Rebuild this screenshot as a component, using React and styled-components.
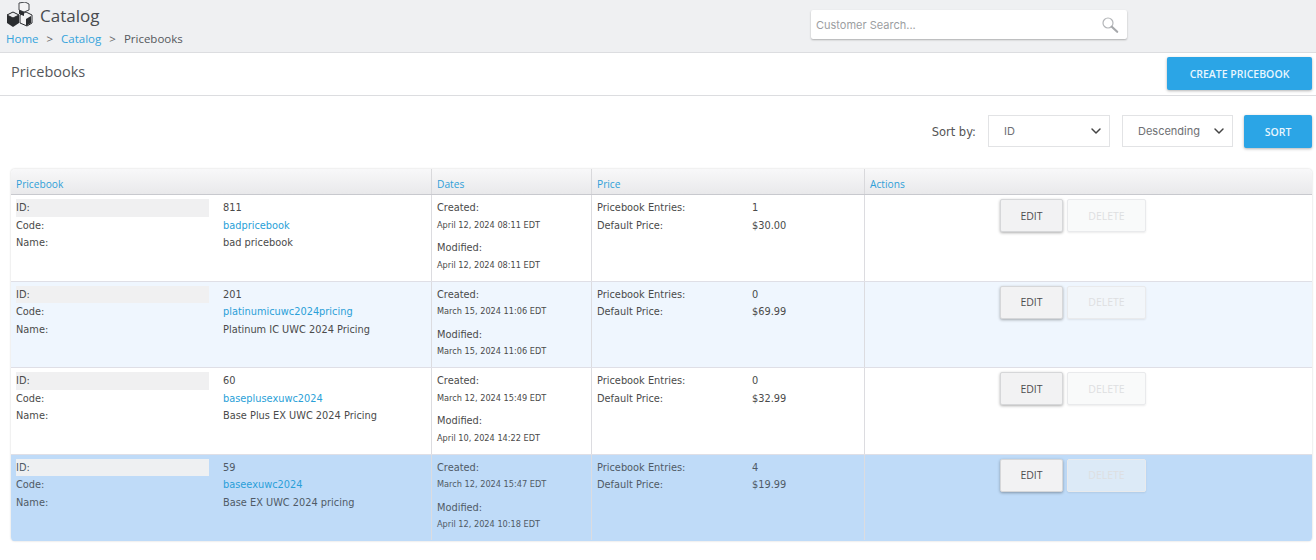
import styled, { createGlobalStyle } from "styled-components";
import { ChevronDown } from "lucide-react";

const pricebooks = [
  {
    id: "811",
    code: "badpricebook",
    name: "bad pricebook",
    created: "April 12, 2024 08:11 EDT",
    modified: "April 12, 2024 08:11 EDT",
    entries: "1",
    price: "$30.00",
    tone: "plain",
  },
  {
    id: "201",
    code: "platinumicuwc2024pricing",
    name: "Platinum IC UWC 2024 Pricing",
    created: "March 15, 2024 11:06 EDT",
    modified: "March 15, 2024 11:06 EDT",
    entries: "0",
    price: "$69.99",
    tone: "alt",
  },
  {
    id: "60",
    code: "baseplusexuwc2024",
    name: "Base Plus EX UWC 2024 Pricing",
    created: "March 12, 2024 15:49 EDT",
    modified: "April 10, 2024 14:22 EDT",
    entries: "0",
    price: "$32.99",
    tone: "plain",
  },
  {
    id: "59",
    code: "baseexuwc2024",
    name: "Base EX UWC 2024 pricing",
    created: "March 12, 2024 15:47 EDT",
    modified: "April 12, 2024 10:18 EDT",
    entries: "4",
    price: "$19.99",
    tone: "selected",
  },
];

function CubesIcon() {
  return (
    <svg width="28" height="26" viewBox="0 0 28 26">
      <path d="M13 1l6-1 4 2v6l-5 2-5-2z" fill="#f4f4f5" stroke="#44474b" strokeWidth="1" />
      <path d="M1 13l6-3 6 3v8l-6 4-6-4z" fill="#2b2d30" />
      <path d="M7 10l6 3-6 3-6-3z" fill="#e9eaec" stroke="#2b2d30" strokeWidth="1" />
      <path d="M14 13l6-3 6 3v8l-5 3-7-3z" fill="#f2f2f3" stroke="#2b2d30" strokeWidth="1" />
      <path d="M20 17l5-3v7l-5 3z" fill="#2b2d30" />
      <path d="M13 8l5 2v4l-5-2z" fill="#2b2d30" />
    </svg>
  );
}

function SearchIcon() {
  return (
    <svg width="18" height="18" viewBox="0 0 18 18" fill="none">
      <circle cx="7" cy="7" r="5" stroke="#b4b6b9" strokeWidth="1.2" />
      <path d="M10.8 10.8l5.4 5" stroke="#a6a8ab" strokeWidth="2.2" strokeLinecap="round" />
    </svg>
  );
}

function PricebookRow({ book }) {
  return (
    <Row $tone={book.tone}>
      <Cell>
        <InfoGrid>
          <IdLabel $tone={book.tone}>ID:</IdLabel>
          <Value>{book.id}</Value>
          <Label>Code:</Label>
          <CodeLink href="#">{book.code}</CodeLink>
          <Label>Name:</Label>
          <Value>{book.name}</Value>
        </InfoGrid>
      </Cell>
      <DateCell>
        <Label>Created:</Label>
        <DateText>{book.created}</DateText>
        <ModifiedLabel>Modified:</ModifiedLabel>
        <DateText>{book.modified}</DateText>
      </DateCell>
      <Cell>
        <PriceGrid>
          <Label>Pricebook Entries:</Label>
          <Value>{book.entries}</Value>
          <Label>Default Price:</Label>
          <Value>{book.price}</Value>
        </PriceGrid>
      </Cell>
      <ActionCell>
        <EditButton>EDIT</EditButton>
        <DeleteButton disabled>DELETE</DeleteButton>
      </ActionCell>
    </Row>
  );
}

export default function App() {
  return (
    <Page>
      <GlobalStyle />
      <TopBar>
        <TitleBlock>
          <TitleLine>
            <CubesIcon />
            <AppTitle>Catalog</AppTitle>
          </TitleLine>
          <Breadcrumbs>
            <Crumb href="#">Home</Crumb>
            <Sep>&gt;</Sep>
            <Crumb href="#">Catalog</Crumb>
            <Sep>&gt;</Sep>
            <span>Pricebooks</span>
          </Breadcrumbs>
        </TitleBlock>
        <SearchBox>
          <SearchPlaceholder>Customer Search...</SearchPlaceholder>
          <SearchIcon />
        </SearchBox>
      </TopBar>

      <HeadingBar>
        <Heading>Pricebooks</Heading>
        <CreateButton>CREATE PRICEBOOK</CreateButton>
      </HeadingBar>

      <SortBar>
        <SortLabel>Sort by:</SortLabel>
        <SelectBox $width={122}>
          <span>ID</span>
          <ChevronDown size={16} strokeWidth={2.2} color="#444" />
        </SelectBox>
        <SelectBox $width={111} $tight>
          <span>Descending</span>
          <ChevronDown size={16} strokeWidth={2.2} color="#444" />
        </SelectBox>
        <SortButton>SORT</SortButton>
      </SortBar>

      <Table>
        <HeaderRow>
          <HeaderCell>Pricebook</HeaderCell>
          <HeaderCell>Dates</HeaderCell>
          <HeaderCell>Price</HeaderCell>
          <HeaderCell>Actions</HeaderCell>
        </HeaderRow>
        {pricebooks.map((book) => (
          <PricebookRow key={book.id} book={book} />
        ))}
      </Table>
    </Page>
  );
}

const GlobalStyle = createGlobalStyle`
  html, body {
    margin: 0;
    padding: 0;
    background: #fff;
  }
  * {
    box-sizing: border-box;
  }
`;

const toneColors = {
  plain: "#ffffff",
  alt: "#eff6fe",
  selected: "#bfdbf8",
};

const columns = "421px 160px 273px 1fr";

const Page = styled.div`
  width: 1316px;
  height: 560px;
  overflow: hidden;
  background: #fff;
  font-family: "DejaVu Sans", sans-serif;
  color: #444;
`;

const TopBar = styled.header`
  height: 53px;
  background: #eff0f2;
  border-bottom: 1px solid #dcdde0;
  display: flex;
  justify-content: space-between;
  padding: 0 189px 0 6px;
`;

const TitleBlock = styled.div`
  display: flex;
  flex-direction: column;
`;

const TitleLine = styled.div`
  display: flex;
  align-items: center;
  gap: 6px;
  height: 30px;
  margin-bottom: 0;
`;

const AppTitle = styled.h1`
  margin: 0;
  font-family: "Open Sans", sans-serif;
  font-weight: 400;
  font-size: 17px;
  color: #4a4c50;
`;

const Breadcrumbs = styled.nav`
  display: flex;
  align-items: center;
  margin-top: 1px;
  font-family: "Open Sans", sans-serif;
  font-size: 11.5px;
  color: #55585c;
`;

const Crumb = styled.a`
  color: #35a4dc;
  text-decoration: none;
`;

const Sep = styled.span`
  margin: 0 8px;
  color: #666;
`;

const SearchBox = styled.div`
  width: 316px;
  height: 29px;
  margin-top: 10px;
  padding: 0 8px 0 5px;
  background: #fff;
  border-radius: 2px;
  box-shadow: 0 1px 2px rgba(0, 0, 0, 0.28);
  display: flex;
  align-items: center;
  justify-content: space-between;
`;

const SearchPlaceholder = styled.span`
  font-family: "Inter", sans-serif;
  font-size: 11px;
  color: #9c9ea1;
`;

const HeadingBar = styled.div`
  height: 43px;
  border-bottom: 1px solid #dcdde0;
  display: flex;
  justify-content: space-between;
  align-items: flex-start;
  padding: 4px 4px 0 11px;
`;

const Heading = styled.h2`
  margin: 5px 0 0;
  font-family: "Open Sans", sans-serif;
  font-weight: 400;
  font-size: 14.5px;
  color: #55585c;
`;

const BlueButton = styled.button`
  border: 0;
  border-radius: 2px;
  background: #2ba5e6;
  color: #e8f6fe;
  font-family: "Open Sans", sans-serif;
  font-weight: 600;
  font-size: 10.5px;
  box-shadow: 0 1px 3px rgba(0, 0, 0, 0.3);
`;

const CreateButton = styled(BlueButton)`
  width: 145px;
  height: 33px;
`;

const SortBar = styled.div`
  height: 73px;
  padding: 19px 4px 0 0;
  display: flex;
  justify-content: flex-end;
  align-items: flex-start;
`;

const SortLabel = styled.span`
  margin: 10px 12px 0 0;
  font-size: 11.5px;
  color: #555;
`;

const SelectBox = styled.div`
  width: ${(p) => p.$width}px;
  height: 32px;
  margin-right: 12px;
  padding: ${(p) => (p.$tight ? "0 0 0 15px" : "0 2px 0 15px")};
  border: 1px solid #e2e3e5;
  background: #fff;
  display: flex;
  align-items: center;
  justify-content: space-between;
  font-family: "Inter", sans-serif;
  font-size: 11px;
  color: #6e7073;
  padding-right: 5px;
`;

const SortButton = styled(BlueButton)`
  width: 68px;
  height: 33px;
  margin-left: -1px;
`;

const Table = styled.div`
  width: 1301px;
  margin-left: 11px;
  border-radius: 4px;
  overflow: hidden;
  box-shadow: 0 0 2px rgba(0, 0, 0, 0.22);
  font-size: 9.8px;
`;

const HeaderRow = styled.div`
  display: grid;
  grid-template-columns: ${columns};
  height: 26px;
  background: linear-gradient(#f8f8f9, #e9e9eb);
  border-bottom: 1px solid #c8c9ce;
`;

const HeaderCell = styled.div`
  padding: 8px 5px 0;
  font-family: "Open Sans", sans-serif;
  font-size: 10.2px;
  color: #2f9fd8;
  border-right: 1px solid #d9d9dc;

  &:last-child {
    border-right: 0;
  }
`;

const Row = styled.div`
  display: grid;
  grid-template-columns: ${columns};
  height: 86.6px;
  background: ${(p) => toneColors[p.$tone]};
  border-bottom: 1px solid ${(p) => (p.$tone === "selected" ? "#bfdbf8" : "#dfdfe6")};
  color: ${(p) => (p.$tone === "selected" ? "#4f5a66" : "#4a4a4a")};
`;

const Cell = styled.div`
  padding: 4px 5px 0;
  border-right: 1px solid #dcdce0;

  ${Row}[data-last] & {
    border-right: 0;
  }
`;

const InfoGrid = styled.div`
  display: grid;
  grid-template-columns: 193px 1fr;
  column-gap: 14px;
  grid-auto-rows: 17.5px;
  align-items: center;
`;

const Label = styled.div`
  line-height: 17.5px;
`;

const IdLabel = styled(Label)`
  background: ${(p) => (p.$tone === "selected" ? "#eef0f2" : "#f0f0f1")};
`;

const Value = styled.div`
  line-height: 17.5px;
`;

const CodeLink = styled.a`
  color: #2a9fd8;
  text-decoration: none;
  line-height: 17.5px;
`;

const DateCell = styled(Cell)`
  display: flex;
  flex-direction: column;
`;

const ModifiedLabel = styled(Label)`
  margin-top: 5px;
`;

const DateText = styled.div`
  font-size: 8.2px;
  line-height: 17.5px;
  white-space: nowrap;
`;

const PriceGrid = styled.div`
  display: grid;
  grid-template-columns: 155px 1fr;
  grid-auto-rows: 17.5px;
  align-items: center;
`;

const ActionCell = styled.div`
  padding: 4px 0 0 135px;
  display: flex;
  align-items: flex-start;
  gap: 4px;
`;

const EditButton = styled.button`
  width: 63px;
  height: 33px;
  border: 1px solid #d6d7d9;
  border-radius: 2px;
  background: #f2f2f3;
  color: #4c4c4e;
  font-family: "Open Sans", sans-serif;
  font-size: 10.5px;
  box-shadow: 0 1px 3px rgba(0, 0, 0, 0.32);
`;

const DeleteButton = styled.button`
  width: 79px;
  height: 33px;
  border: 1px solid #e9eaec;
  border-radius: 2px;
  background: rgba(244, 245, 246, 0.55);
  color: #dedfe1;
  font-family: "Open Sans", sans-serif;
  font-size: 10.5px;
  box-shadow: 0 1px 2px rgba(0, 0, 0, 0.08);
`;
